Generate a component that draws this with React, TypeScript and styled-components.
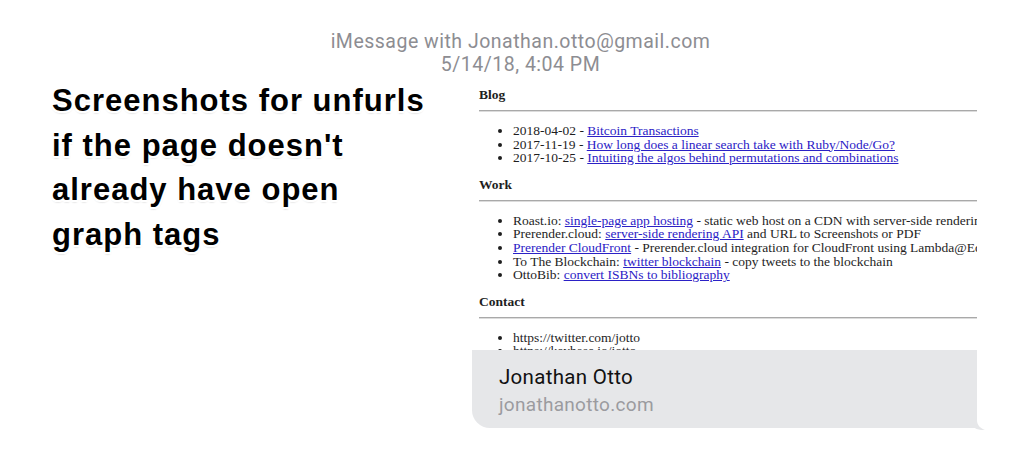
import React from "react";
import styled, { createGlobalStyle } from "styled-components";

const GlobalStyle = createGlobalStyle`
  html, body {
    margin: 0;
    padding: 0;
    background: #ffffff;
  }
  #root {
    width: 1024px;
    height: 452px;
    overflow: hidden;
  }
`;

const BLOG_POSTS = [
  { date: "2018-04-02", title: "Bitcoin Transactions" },
  { date: "2017-11-19", title: "How long does a linear search take with Ruby/Node/Go?" },
  { date: "2017-10-25", title: "Intuiting the algos behind permutations and combinations" },
];

const HEADLINE = ["Screenshots for unfurls", "if the page doesn't", "already have open", "graph tags"];

export default function App() {
  return (
    <>
      <GlobalStyle />
      <Screen>
        <ThreadHeader>
          <HeaderLine>iMessage with Jonathan.otto@gmail.com</HeaderLine>
          <HeaderLine>5/14/18, 4:04 PM</HeaderLine>
        </ThreadHeader>
        <MainRow>
          <Headline>
            {HEADLINE.map((line) => (
              <HeadlineLine key={line}>{line}</HeadlineLine>
            ))}
          </Headline>
          <LinkCard>
            <PreviewImage>
              <PageSection>
                <SectionTitle>Blog</SectionTitle>
                <Rule />
                <ItemList>
                  {BLOG_POSTS.map((post) => (
                    <Item key={post.date}>
                      {post.date} - <PageLink>{post.title}</PageLink>
                    </Item>
                  ))}
                </ItemList>
              </PageSection>
              <PageSection>
                <SectionTitle>Work</SectionTitle>
                <Rule />
                <ItemList>
                  <Item>
                    Roast.io: <PageLink>single-page app hosting</PageLink> - static web host on a CDN with server-side rendering
                  </Item>
                  <Item>
                    Prerender.cloud: <PageLink>server-side rendering API</PageLink> and URL to Screenshots or PDF
                  </Item>
                  <Item>
                    <PageLink>Prerender CloudFront</PageLink> - Prerender.cloud integration for CloudFront using Lambda@Edge
                  </Item>
                  <Item>
                    To The Blockchain: <PageLink>twitter blockchain</PageLink> - copy tweets to the blockchain
                  </Item>
                  <Item>
                    OttoBib: <PageLink>convert ISBNs to bibliography</PageLink>
                  </Item>
                </ItemList>
              </PageSection>
              <PageSection>
                <SectionTitle>Contact</SectionTitle>
                <Rule />
                <ItemList>
                  <Item>https://twitter.com/jotto</Item>
                  <Item>https://keybase.io/jotto</Item>
                </ItemList>
              </PageSection>
            </PreviewImage>
            <Caption>
              <CaptionTitle>Jonathan Otto</CaptionTitle>
              <CaptionSite>jonathanotto.com</CaptionSite>
              <Tail viewBox="0 0 20 10" aria-hidden="true">
                <path d="M0 0 H12 C12 5 15 8 20 10 C15 10.5 11 9 8 7 C6 8 3 8 0 8 Z" fill="#e6e7e9" />
              </Tail>
            </Caption>
          </LinkCard>
        </MainRow>
      </Screen>
    </>
  );
}

const Screen = styled.div`
  width: 1024px;
  height: 452px;
  padding-top: 30px;
  box-sizing: border-box;
  background: #ffffff;
`;

const ThreadHeader = styled.div`
  display: flex;
  flex-direction: column;
  align-items: center;
  padding-left: 17px;
`;

const HeaderLine = styled.div`
  font-family: Roboto, "Liberation Sans", sans-serif;
  font-size: 19.5px;
  line-height: 23px;
  color: #8d8d92;
  letter-spacing: 0.5px;
`;

const MainRow = styled.div`
  display: flex;
  align-items: flex-start;
  margin-top: 3px;
`;

const Headline = styled.div`
  width: 420px;
  padding-left: 52px;
  display: flex;
  flex-direction: column;
`;

const HeadlineLine = styled.div`
  font-family: "Liberation Sans", Arial, sans-serif;
  font-weight: 700;
  font-size: 31px;
  line-height: 44.5px;
  letter-spacing: 1px;
  color: #000000;
  white-space: nowrap;
  text-shadow:
    2px 0 0 #fff, -2px 0 0 #fff, 0 2px 0 #fff, 0 -2px 0 #fff,
    1.5px 1.5px 0 #fff, -1.5px 1.5px 0 #fff, 1.5px -1.5px 0 #fff, -1.5px -1.5px 0 #fff,
    0 2px 2px rgba(0, 0, 0, 0.3);
`;

const LinkCard = styled.div`
  width: 505px;
  display: flex;
  flex-direction: column;
`;

const PreviewImage = styled.div`
  height: 271px;
  overflow: hidden;
  padding: 9px 0 0 7px;
  box-sizing: border-box;
  font-family: "Liberation Serif", "Times New Roman", serif;
  font-size: 13.5px;
  color: #1e1e1e;
`;

const PageSection = styled.section`
  display: flex;
  flex-direction: column;
`;

const SectionTitle = styled.div`
  font-weight: 700;
  line-height: 14px;
`;

const Rule = styled.div`
  height: 1px;
  margin-top: 8px;
  background: #a9a9a9;
  box-shadow: 0 1px 0 #dcdcdc;
`;

const ItemList = styled.ul`
  margin: 13px 0 13px 0;
  padding-left: 34px;
`;

const Item = styled.li`
  line-height: 13.6px;
  white-space: nowrap;
`;

const PageLink = styled.span`
  color: #2b21c6;
  text-decoration: underline;
`;

const Caption = styled.div`
  position: relative;
  height: 78px;
  background: #e6e7e9;
  border-bottom-left-radius: 18px;
  padding: 14px 27px 0;
  box-sizing: border-box;
  display: flex;
  flex-direction: column;
`;

const CaptionTitle = styled.div`
  font-family: Roboto, "Liberation Sans", sans-serif;
  font-size: 20.5px;
  line-height: 26px;
  color: #111111;
  letter-spacing: 0.3px;
`;

const CaptionSite = styled.div`
  font-family: Roboto, "Liberation Sans", sans-serif;
  font-size: 19px;
  line-height: 30px;
  color: #9b9b9f;
  letter-spacing: 0.3px;
`;

const Tail = styled.svg`
  position: absolute;
  right: -8px;
  bottom: -2px;
  width: 20px;
  height: 10px;
`;
